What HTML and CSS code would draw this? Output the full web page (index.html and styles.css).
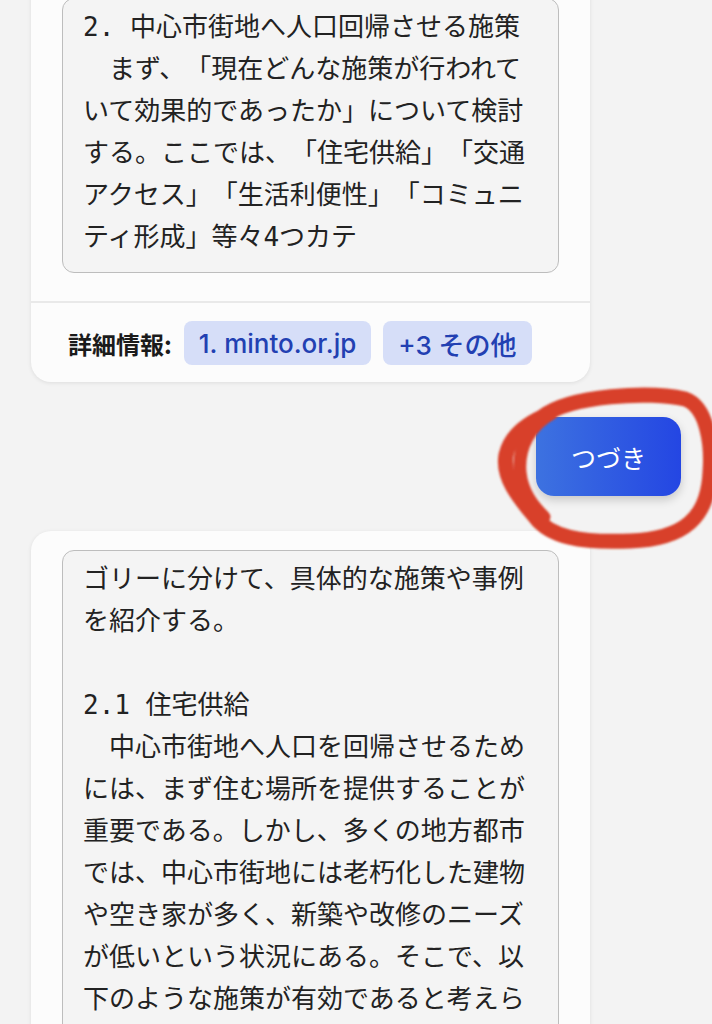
FILE: index.html
```html
<!DOCTYPE html>
<html>
<head>
  <meta charset="utf-8">
  <title>回答</title>
  <link rel="stylesheet" href="styles.css">
</head>
<body>
  <div class="chat">

    <div class="card">
      <div class="card-body">
        <pre class="answer">2. 中心市街地へ人口回帰させる施策
　まず、「現在どんな施策が行われて
いて効果的であったか」について検討
する。ここでは、「住宅供給」「交通
アクセス」「生活利便性」「コミュニ
ティ形成」等々4つカテ</pre>
      </div>
      <div class="card-foot">
        <span class="label">詳細情報:</span>
        <a class="chip">1. minto.or.jp</a>
        <a class="chip">+3 その他</a>
      </div>
    </div>

    <div class="next-row">
      <button class="next">つづき</button>
      <!-- hand drawn mark -->
      <svg class="mark" width="240" height="175" viewBox="0 0 240 175">
        <defs>
          <filter id="soft"><feGaussianBlur stdDeviation="0.9"/></filter>
        </defs>
        <g fill="none" stroke="#d8412a" stroke-linecap="round" filter="url(#soft)">
          <path stroke-width="15" d="M62 40 C90 18 170 14 205 22 C228 30 232 70 230 95 C228 140 205 162 150 164 C100 166 70 160 55 140 C38 120 22 100 26 78 C30 60 45 48 62 40 Z"/>
          <path stroke-width="13" d="M72 36 C50 48 38 70 40 95 C42 115 52 128 64 140"/>
        </g>
      </svg>
    </div>

    <div class="card">
      <div class="card-body top">
        <pre class="answer">ゴリーに分けて、具体的な施策や事例
を紹介する。

2.1 住宅供給
　中心市街地へ人口を回帰させるため
には、まず住む場所を提供することが
重要である。しかし、多くの地方都市
では、中心市街地には老朽化した建物
や空き家が多く、新築や改修のニーズ
が低いという状況にある。そこで、以
下のような施策が有効であると考えら
れる。</pre>
      </div>
    </div>

  </div>
</body>
</html>
```

FILE: styles.css
```css
body {
  margin: 0;
  background: #f3f3f3;
  font-family: "Noto Sans CJK JP", sans-serif;
  color: #1d1d1d;
}

.chat {
  margin-top: -22px;
  display: flex;
  flex-direction: column;
  gap: 35px;
}

.card {
  margin-left: 31px;
  width: 559px;
  box-sizing: border-box;
  background: #fcfcfc;
  border-radius: 20px;
  box-shadow: 0 1px 4px rgba(0, 0, 0, 0.09);
}

.card-body {
  padding: 20px 31px 28px;
}

.card-body.top {
  padding-top: 19px;
}

.answer {
  margin: 0;
  padding: 7px 20px 14px;
  border: 1.5px solid #bdbdbd;
  border-radius: 12px;
  background: #f4f4f4;
  font-family: "DejaVu Sans Mono", "Noto Sans CJK JP", monospace;
  font-size: 26px;
  line-height: 42px;
  color: #222;
  white-space: pre-wrap;
  text-spacing-trim: space-all;
}

.card-foot {
  display: flex;
  align-items: center;
  gap: 12px;
  border-top: 2px solid #e9e9e9;
  padding: 18px 37px 17px;
}

.label {
  font-size: 24px;
  font-weight: bold;
  color: #1b1b1b;
}

.chip {
  display: flex;
  align-items: center;
  height: 44px;
  padding: 0 15px;
  border-radius: 8px;
  background: #d6def8;
  color: #2240b2;
  font-family: Inter, "Noto Sans CJK JP", sans-serif;
  font-size: 26px;
  font-weight: 500;
  text-decoration: none;
}

.next-row {
  position: relative;
  display: flex;
  justify-content: flex-end;
  padding-right: 31px;
}

.next {
  width: 145px;
  height: 79px;
  border: none;
  border-radius: 18px;
  background: linear-gradient(90deg, #3d72e0, #2446e3);
  color: #fff;
  font-family: "Noto Sans CJK JP", sans-serif;
  font-size: 25px;
  box-shadow: 0 4px 10px rgba(0, 0, 0, 0.18);
}

.mark {
  position: absolute;
  left: 480px;
  top: -40px;
  pointer-events: none;
}
```
